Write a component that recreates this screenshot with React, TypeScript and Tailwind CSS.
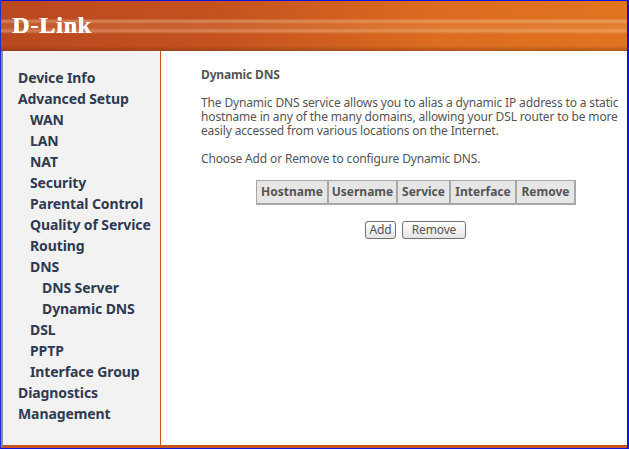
const menu = [
  { label: "Device Info", level: 0 },
  { label: "Advanced Setup", level: 0 },
  { label: "WAN", level: 1 },
  { label: "LAN", level: 1 },
  { label: "NAT", level: 1 },
  { label: "Security", level: 1 },
  { label: "Parental Control", level: 1 },
  { label: "Quality of Service", level: 1 },
  { label: "Routing", level: 1 },
  { label: "DNS", level: 1 },
  { label: "DNS Server", level: 2 },
  { label: "Dynamic DNS", level: 2 },
  { label: "DSL", level: 1 },
  { label: "PPTP", level: 1 },
  { label: "Interface Group", level: 1 },
  { label: "Diagnostics", level: 0 },
  { label: "Management", level: 0 },
]

const columns = [
  { label: "Hostname", width: "w-[72px]" },
  { label: "Username", width: "w-[69px]" },
  { label: "Service", width: "w-[53px]" },
  { label: "Interface", width: "w-[66px]" },
  { label: "Remove", width: "w-[59px]" },
]

const indent = ["pl-[15px]", "pl-[27px]", "pl-[39px]"]

export default function App() {
  return (
    <div className="flex h-[449px] w-[629px] flex-col overflow-hidden border-t border-r-2 border-b border-l border-t-[#1010e0] border-r-[#1010e0] border-b-[#1010e0] border-l-[#2030d0] bg-white font-['Noto_Sans',sans-serif]">
      <div className="flex h-[50px] shrink-0 items-center bg-[linear-gradient(180deg,transparent_0,transparent_35%,rgba(255,220,180,0.4)_40%,rgba(255,220,180,0.1)_46%,rgba(255,220,180,0.12)_54%,rgba(255,220,180,0.38)_60%,transparent_66%,transparent_90%,rgba(110,50,20,0.45)_100%),linear-gradient(90deg,#b9481f_0%,#c4521f_35%,#dc6c20_70%,#e07420_100%)] pb-[2px] pl-[11px]">
        <span className="font-['Liberation_Serif',serif] text-[24px] leading-none font-bold tracking-[0.85px] text-white [text-shadow:0.5px_0_0_#ffffff]">D-Link</span>
      </div>
      <div className="flex min-h-0 flex-1 border-b-[3px] border-l-[2px] border-b-[#c8561f] border-l-[#8a8f9a]">
        <div className="w-[158px] shrink-0 border-r border-r-[#c8561f] bg-[#f2f2f2] pt-[16px]">
          {menu.map((item) => (
            <div key={item.label} className={`h-[21px] text-[14px] leading-[21px] font-bold tracking-[-0.1px] text-[#2f3a50] ${indent[item.level]}`}>
              {item.label}
            </div>
          ))}
        </div>
        <div className="min-w-0 flex-1 pt-[17px] pl-[40px] text-[12px] leading-[14px] tracking-[-0.15px] text-[#555555]">
          <div className="font-bold">Dynamic DNS</div>
          <p className="mt-[14px] w-[425px]">
            The Dynamic DNS service allows you to alias a dynamic IP address to a static hostname in any of the many domains, allowing your DSL router to be more easily accessed from various locations on the Internet.
          </p>
          <p className="mt-[14px]">Choose Add or Remove to configure Dynamic DNS.</p>
          <div className="mt-[14px] flex w-[430px] justify-center">
            <table className="table-fixed border-separate border-spacing-0 border-t border-l border-[#a8a8a8]">
              <thead>
                <tr>
                  {columns.map((c) => (
                    <th key={c.label} className={`h-[24px] border-r-2 border-b-2 border-[#a8a8a8] bg-[#e6e6e6] p-0 text-center text-[12px] font-bold tracking-[0px] text-[#555555] ${c.width}`}>
                      {c.label}
                    </th>
                  ))}
                </tr>
              </thead>
            </table>
          </div>
          <div className="mt-[16px] flex w-[429px] justify-center gap-[6px]">
            <button className="h-[18px] w-[31px] rounded-[3px] border border-[#707070] bg-[linear-gradient(180deg,#ffffff,#e4e4e4)] text-[12px] leading-none text-[#555555]">Add</button>
            <button className="h-[18px] w-[64px] rounded-[3px] border border-[#707070] bg-[linear-gradient(180deg,#ffffff,#e4e4e4)] text-[12px] leading-none text-[#555555]">Remove</button>
          </div>
        </div>
      </div>
    </div>
  )
}
